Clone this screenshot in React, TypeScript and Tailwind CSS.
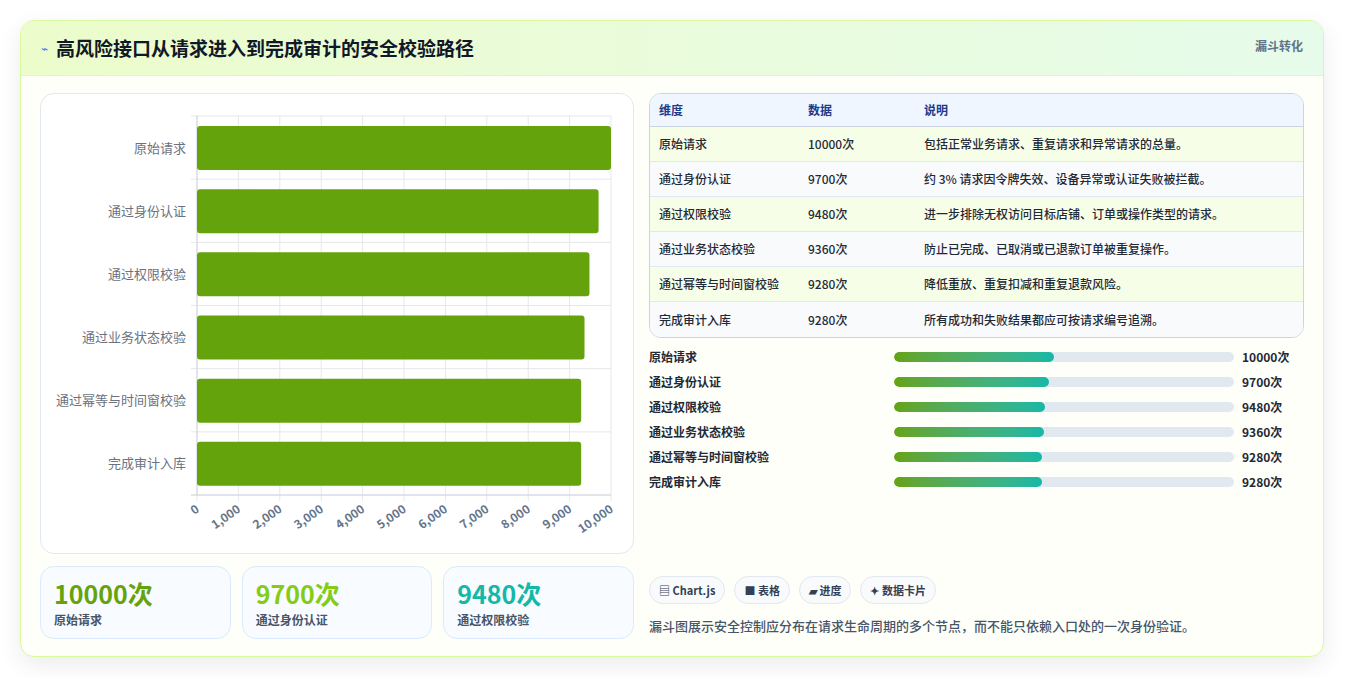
import React from "react";

const data = [
  { n: "原始请求", v: 10000, d: "包括正常业务请求、重复请求和异常请求的总量。" },
  { n: "通过身份认证", v: 9700, d: "约 3% 请求因令牌失效、设备异常或认证失败被拦截。" },
  { n: "通过权限校验", v: 9480, d: "进一步排除无权访问目标店铺、订单或操作类型的请求。" },
  { n: "通过业务状态校验", v: 9360, d: "防止已完成、已取消或已退款订单被重复操作。" },
  { n: "通过幂等与时间窗校验", v: 9280, d: "降低重放、重复扣减和重复退款风险。" },
  { n: "完成审计入库", v: 9280, d: "所有成功和失败结果都应可按请求编号追溯。" },
];

function Chart() {
  const x0 = 156, x1 = 570, y0 = 22, y1 = 401;
  const band = (y1 - y0) / 6;
  const sx = (v: number) => x0 + ((x1 - x0) * v) / 10000;
  const ticks = [0, 1000, 2000, 3000, 4000, 5000, 6000, 7000, 8000, 9000, 10000];
  return (
    <svg width="593" height="460" viewBox="0 0 593 460" style={{ fontFamily: "'Noto Sans CJK SC', 'Liberation Sans', sans-serif" }}>
      {ticks.map((t) => (
        <line key={t} x1={sx(t)} x2={sx(t)} y1={y0} y2={y1 + 6} stroke="#e5e7eb" strokeWidth="1" />
      ))}
      {[0, 1, 2, 3, 4, 5, 6].map((i) => (
        <line key={i} x1={x0 - 6} x2={x1} y1={y0 + band * i} y2={y0 + band * i} stroke="#e5e7eb" strokeWidth="1" />
      ))}
      <line x1={x0} x2={x0} y1={y0} y2={y1} stroke="#d1d5db" />
      <line x1={x0 - 6} x2={x1} y1={y1} y2={y1} stroke="#d1d5db" />
      {data.map((r, i) => (
        <g key={r.n}>
          <rect x={x0} y={y0 + band * i + 10} width={sx(r.v) - x0} height={44} rx="3" fill="#65a30d" />
          <text x={145} y={y0 + band * i + band / 2 + 5} textAnchor="end" fontSize="13" fill="#6b7280">{r.n}</text>
        </g>
      ))}
      {ticks.map((t) => (
        <text key={t} x={sx(t) + 3} y={y1 + 16} textAnchor="end" fontSize="12" fontWeight="600" fill="#64748b" transform={`rotate(-35 ${sx(t) + 3} ${y1 + 16})`}>
          {t.toLocaleString("en-US")}
        </text>
      ))}
    </svg>
  );
}

export default function App() {
  const font = { fontFamily: "'Noto Sans CJK SC', 'Liberation Sans', sans-serif" };
  return (
    <div className="w-[1345px] h-[678px] bg-white pt-[20px] pl-[20px]" style={font}>
      <div className="w-[1304px] h-[637px] rounded-[14px] border border-[#d9f99d] bg-[#fefff8] shadow-[0_8px_24px_rgba(0,0,0,0.08)] overflow-hidden flex flex-col">
        <div className="h-[55px] flex items-center justify-between px-[20px] border-b border-[#e5f3d4] bg-gradient-to-r from-[#ecfccb] to-[#e6fbea]">
          <div className="flex items-center gap-[8px]">
            <span className="text-[#3b82f6] text-[12px]">⌁</span>
            <span className="text-[19px] font-bold text-[#111827]">高风险接口从请求进入到完成审计的安全校验路径</span>
          </div>
          <span className="text-[12px] font-bold text-[#64748b] self-start mt-[16px]">漏斗转化</span>
        </div>
        <div className="flex gap-[15px] px-[19px] pt-[17px]">
          <div className="w-[594px] flex flex-col gap-[12px]">
            <div className="h-[461px] rounded-[14px] border border-[#e2e8f0] bg-white overflow-hidden">
              <Chart />
            </div>
            <div className="grid grid-cols-3 gap-[11px]">
              {[
                ["10000次", "原始请求", "text-[#65a30d]"],
                ["9700次", "通过身份认证", "text-[#84cc16]"],
                ["9480次", "通过权限校验", "text-[#14b8a6]"],
              ].map(([v, l, c]) => (
                <div key={l} className="h-[73px] rounded-[14px] border border-[#dbeafe] bg-[#f8fbff] px-[13px] pt-[10px]">
                  <div className={`text-[25px] leading-[32px] font-bold ${c}`}>{v}</div>
                  <div className="text-[12px] font-bold text-[#475569] mt-[2px]">{l}</div>
                </div>
              ))}
            </div>
          </div>
          <div className="w-[658px] flex flex-col">
            <div className="rounded-[12px] border border-[#cbd5e1] overflow-hidden">
              <div className="h-[33px] flex items-center bg-[#eff6ff] border-b border-[#cbd5e1] text-[12px] font-bold text-[#1e3a8a]">
                <div className="w-[158px] pl-[9px]">维度</div>
                <div className="w-[116px]">数据</div>
                <div>说明</div>
              </div>
              {data.map((r, i) => (
                <div key={r.n} className={`h-[35px] flex items-center text-[12px] font-medium text-[#1f2937] ${i < 5 ? "border-b border-[#e2e8f0]" : ""} ${i % 2 === 0 ? "bg-[#f7fee7]" : "bg-[#f8fafc]"}`}>
                  <div className="w-[158px] pl-[9px]">{r.n}</div>
                  <div className="w-[116px]">{r.v}次</div>
                  <div>{r.d}</div>
                </div>
              ))}
            </div>
            <div className="flex flex-col gap-[7px] mt-[10px]">
              {data.map((r) => (
                <div key={r.n} className="h-[18px] flex items-center text-[12px] font-bold text-[#1f2937]">
                  <div className="w-[245px]">{r.n}</div>
                  <div className="w-[340px] h-[10px] rounded-full bg-[#e2e8f0] overflow-hidden">
                    <div className="h-full rounded-full bg-gradient-to-r from-[#65a30d] to-[#14b8a6]" style={{ width: `${(r.v / 10000) * 47}%` }} />
                  </div>
                  <div className="ml-[8px]">{r.v}次</div>
                </div>
              ))}
            </div>
            <div className="flex gap-[9px] mt-[85px]">
              {["▤ Chart.js", "■ 表格", "▰ 进度", "✦ 数据卡片"].map((t) => (
                <span key={t} className="h-[28px] px-[9px] flex items-center rounded-full border border-[#e2e8f0] bg-[#f8fafc] text-[11px] font-bold text-[#334155]">{t}</span>
              ))}
            </div>
            <div className="mt-[12px] text-[13px] font-medium text-[#475569]">漏斗图展示安全控制应分布在请求生命周期的多个节点，而不能只依赖入口处的一次身份验证。</div>
          </div>
        </div>
      </div>
    </div>
  );
}
